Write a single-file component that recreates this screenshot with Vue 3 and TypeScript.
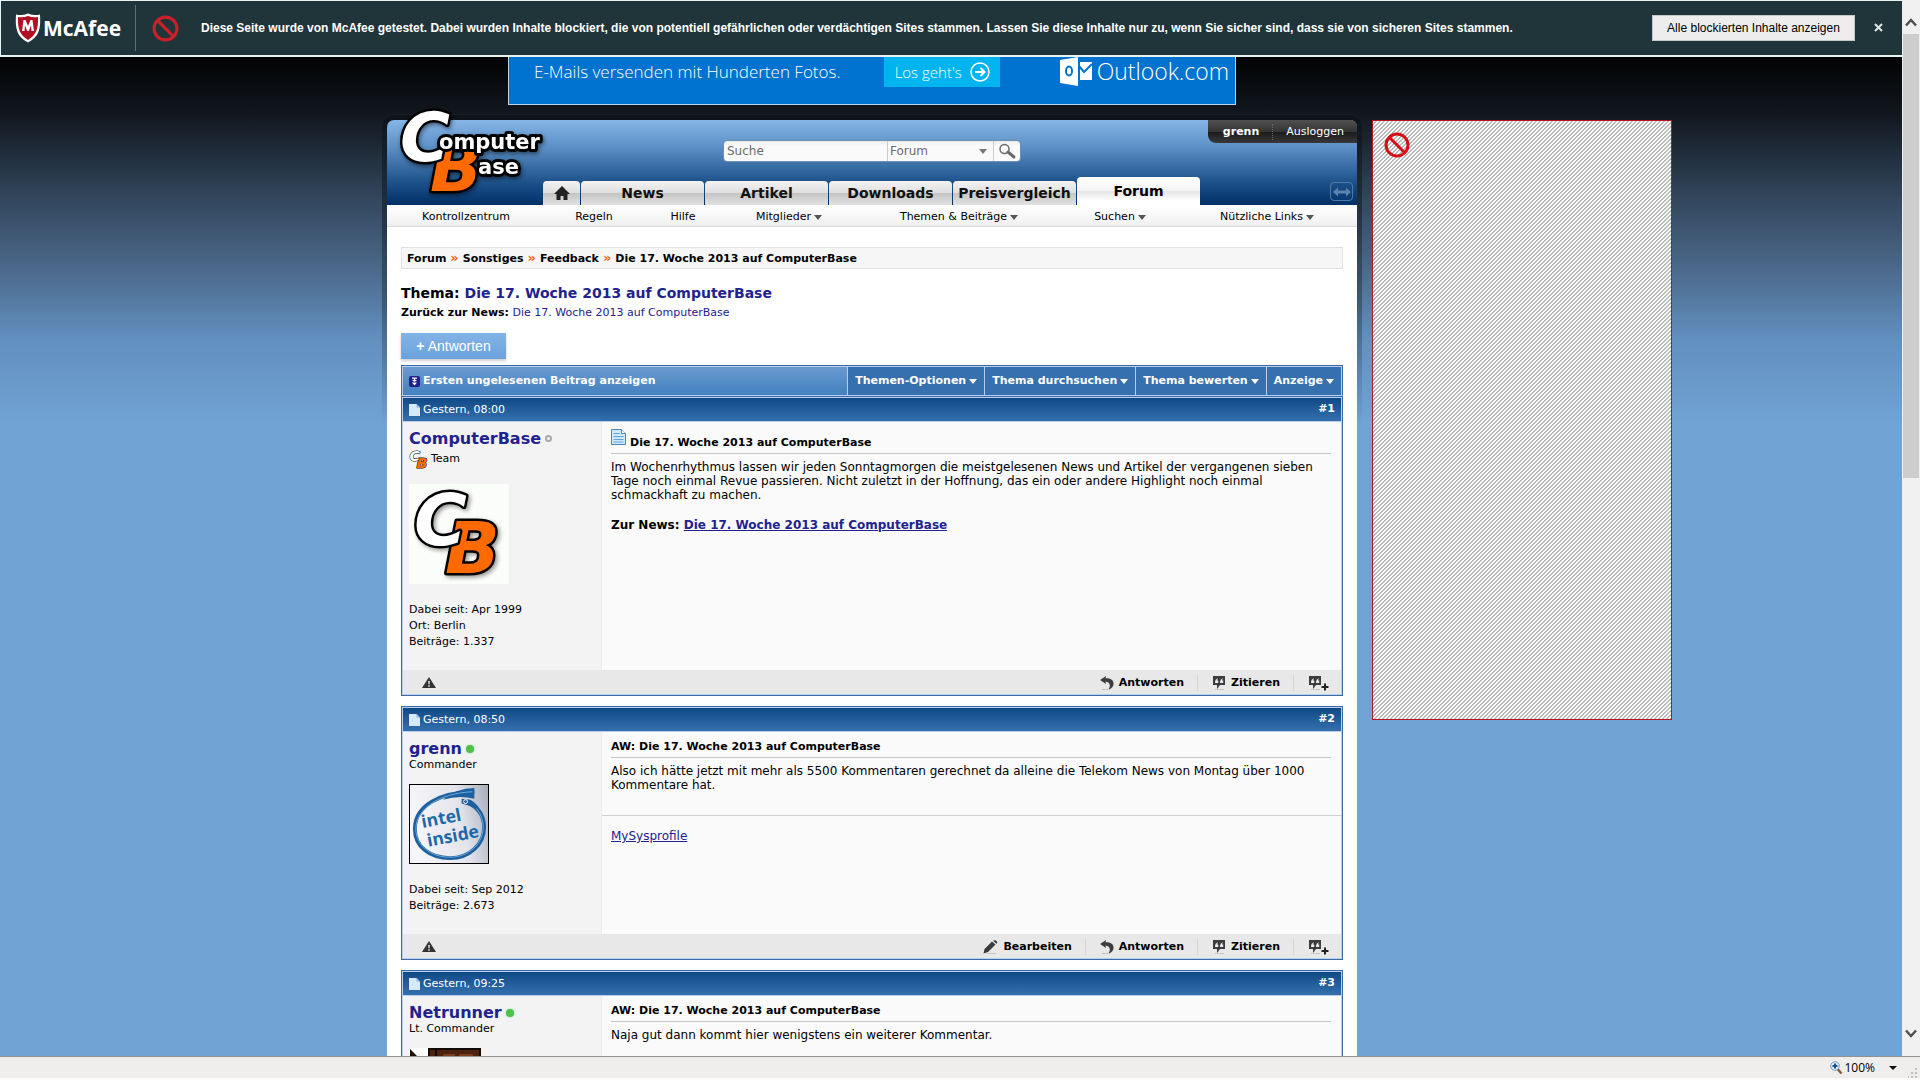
<script setup lang="ts">
interface Post {
  no: number
  time: string
  user: string
  online: boolean
  rank: string
  team?: boolean
  avatar: 'cb' | 'intel' | 'door'
  stats: string[]
  title: string
  icon?: boolean
  text: string
  newsLink?: string
  signature?: string
  editable?: boolean
}

const tabs = ['News', 'Artikel', 'Downloads', 'Preisvergleich']

const subnav = [
  { label: 'Kontrollzentrum', menu: false },
  { label: 'Regeln', menu: false },
  { label: 'Hilfe', menu: false },
  { label: 'Mitglieder', menu: true },
  { label: 'Themen & Beiträge', menu: true },
  { label: 'Suchen', menu: true },
  { label: 'Nützliche Links', menu: true },
]

const crumbs = ['Forum', 'Sonstiges', 'Feedback']
const threadTitle = 'Die 17. Woche 2013 auf ComputerBase'
const threadMenus = ['Themen-Optionen', 'Thema durchsuchen', 'Thema bewerten', 'Anzeige']

const posts: Post[] = [
  {
    no: 1,
    time: 'Gestern, 08:00',
    user: 'ComputerBase',
    online: false,
    rank: 'Team',
    team: true,
    avatar: 'cb',
    stats: ['Dabei seit: Apr 1999', 'Ort: Berlin', 'Beiträge: 1.337'],
    title: threadTitle,
    icon: true,
    text: 'Im Wochenrhythmus lassen wir jeden Sonntagmorgen die meistgelesenen News und Artikel der vergangenen sieben Tage noch einmal Revue passieren. Nicht zuletzt in der Hoffnung, das ein oder andere Highlight noch einmal schmackhaft zu machen.',
    newsLink: threadTitle,
  },
  {
    no: 2,
    time: 'Gestern, 08:50',
    user: 'grenn',
    online: true,
    rank: 'Commander',
    avatar: 'intel',
    stats: ['Dabei seit: Sep 2012', 'Beiträge: 2.673'],
    title: 'AW: ' + threadTitle,
    text: 'Also ich hätte jetzt mit mehr als 5500 Kommentaren gerechnet da alleine die Telekom News von Montag über 1000 Kommentare hat.',
    signature: 'MySysprofile',
    editable: true,
  },
  {
    no: 3,
    time: 'Gestern, 09:25',
    user: 'Netrunner',
    online: true,
    rank: 'Lt. Commander',
    avatar: 'door',
    stats: [],
    title: 'AW: ' + threadTitle,
    text: 'Naja gut dann kommt hier wenigstens ein weiterer Kommentar.',
  },
]
</script>

<template>
  <div class="window">
    <svg class="defs" width="0" height="0" aria-hidden="true">
      <symbol id="blocked" viewBox="0 0 26 26">
        <circle cx="13" cy="13" r="11" fill="none" stroke="currentColor" stroke-width="3" />
        <path d="M5.500 5.500 20.500 20.500" stroke="currentColor" stroke-width="3" />
      </symbol>
      <symbol id="quote" viewBox="0 0 14 14">
        <path d="M1 0h12v9H8l-3 4V9H1z" fill="#3c3c3c" />
        <path d="M6 2.200C4 3 3 4 3 7h3.200V4.400H5zM11 2.200C9 3 8 4 8 7h3.200V4.400H10z" fill="#eee" />
        <path d="M3 13.500h9" stroke="#c4c4c4" />
      </symbol>
    </svg>

    <div class="view">
      <main class="page">
        <section class="guard">
          <div class="guard-logo">
            <svg width="26" height="30" viewBox="0 0 26 30">
              <path d="M1 1.500Q7 3 13 .500Q19 3 25 1.500C26 16 24 24 13 29.500C2 24 0 16 1 1.500z" fill="#fff" />
              <path d="M3 4Q8 5 13 3Q18 5 23 4C23.500 16 21 22 13 27C5 22 2.500 16 3 4z" fill="#b01022" />
              <path d="M7 18L8.500 7h2L13 13l2.500-6h2L19 18h-2.500L16 12.500 13.800 18h-1.600L10 12.500 9.500 18z" fill="#fff" />
            </svg>
            <span>McAfee</span>
          </div>
          <svg class="guard-icon" width="27" height="27"><use href="#blocked" /></svg>
          <p>Diese Seite wurde von McAfee getestet. Dabei wurden Inhalte blockiert, die von potentiell gefährlichen oder verdächtigen Sites stammen. Lassen Sie diese Inhalte nur zu, wenn Sie sicher sind, dass sie von sicheren Sites stammen.</p>
          <button class="guard-show" type="button">Alle blockierten Inhalte anzeigen</button>
          <button class="guard-close" type="button" aria-label="Schließen">
            <svg width="9" height="9" viewBox="0 0 9 9"><path d="M1 1l7 7M8 1L1 8" stroke="#dfe6e6" stroke-width="2" /></svg>
          </button>
        </section>

        <div class="layout">
          <div class="site">
            <div class="banner">
              <span class="banner-text">E-Mails versenden mit Hunderten Fotos.</span>
              <a class="banner-go" href="#">
                Los geht's
                <svg width="20" height="20" viewBox="0 0 20 20" fill="none" stroke="#fff">
                  <circle cx="10" cy="10" r="9" stroke-width="1.500" />
                  <path d="M5 10h9M10.500 6l4 4-4 4" stroke-width="2" />
                </svg>
              </a>
              <div class="outlook">
                <svg width="32" height="30" viewBox="0 0 32 30">
                  <path d="M20 5h12v18H20z" fill="#fff" />
                  <path d="M19 9l5 6 8-8" stroke="#0072d0" stroke-width="2" fill="none" />
                  <path d="M0 3L18 0v29L0 26z" fill="#fff" />
                  <ellipse cx="9" cy="14" rx="3" ry="4.500" fill="none" stroke="#0072d0" stroke-width="2" />
                </svg>
                <span>Outlook.com</span>
              </div>
            </div>

            <div class="frame">
              <header class="head">
                <a class="logo" href="#" aria-label="ComputerBase">
                  <svg width="160" height="100" viewBox="0 0 160 100">
                    <g class="mark">
                      <text x="35" y="87" font-size="68" fill="#ff6a00">B</text>
                      <text x="5" y="57" font-size="68" fill="#fff">C</text>
                    </g>
                    <g class="words">
                      <text x="44" y="45">omputer</text>
                      <text x="83" y="70">ase</text>
                    </g>
                  </svg>
                </a>
                <form class="search" @submit.prevent>
                  <input type="text" placeholder="Suche" aria-label="Suche" />
                  <select aria-label="Bereich"><option>Forum</option></select>
                  <svg class="select-arrow" width="8" height="5"><path d="M0 0h8L4 5z" fill="#777" /></svg>
                  <button type="submit" aria-label="Suchen">
                    <svg width="18" height="16" viewBox="0 0 18 16" fill="none" stroke="#6b6b6b">
                      <circle cx="6.500" cy="6" r="4.500" stroke-width="1.500" />
                      <path d="M10 9l6 5" stroke-width="3" stroke-linecap="round" />
                    </svg>
                  </button>
                </form>
                <div class="user"><a href="#"><b>grenn</b></a><i></i><a href="#">Ausloggen</a></div>
                <nav class="tabs">
                  <a class="tab home" href="#" aria-label="Startseite">
                    <svg width="16" height="14" viewBox="0 0 16 14"><path d="M8 0l8 8h-2.500v6H9.500v-4h-3v4H2.500V8H0z" fill="#222" /></svg>
                  </a>
                  <a v-for="t in tabs" :key="t" class="tab" href="#">{{ t }}</a>
                  <a class="tab active" href="#">Forum</a>
                  <button class="wide" type="button" aria-label="Breite umschalten">
                    <svg width="18" height="10" viewBox="0 0 18 10"><path d="M0 5l5-4.500v3h8v-3L18 5l-5 4.500v-3H5v3z" fill="#5b83ad" /></svg>
                  </button>
                </nav>
              </header>

              <nav class="subnav">
                <a v-for="s in subnav" :key="s.label" href="#">
                  {{ s.label }}<svg v-if="s.menu" width="8" height="5"><path d="M0 0h8L4 5z" fill="#555" /></svg>
                </a>
              </nav>

              <div class="content">
                <div class="crumbs">
                  <template v-for="c in crumbs" :key="c"><a href="#">{{ c }}</a><em>»</em></template>
                  <span>{{ threadTitle }}</span>
                </div>
                <h1>Thema: <a href="#">{{ threadTitle }}</a></h1>
                <p class="back"><b>Zurück zur News:</b> <a href="#">{{ threadTitle }}</a></p>
                <button class="reply" type="button"><b>+</b> Antworten</button>

                <div class="toolbar">
                  <a class="unread" href="#">
                    <svg width="11" height="11" viewBox="0 0 11 11">
                      <rect width="11" height="11" rx="2" fill="#20208c" />
                      <path d="M3 1.500h5v1.200H6.200V4H8L5.500 6 3 4h1.800V2.700H3zM3 6.500h5L5.500 9.500z" fill="#fff" />
                    </svg>
                    Ersten ungelesenen Beitrag anzeigen
                  </a>
                  <button v-for="m in threadMenus" :key="m" type="button">
                    {{ m }}<svg width="8" height="5"><path d="M0 0h8L4 5z" fill="#fff" /></svg>
                  </button>
                </div>

                <article v-for="p in posts" :key="p.no" class="post">
                  <header class="post-head">
                    <svg width="11" height="12" viewBox="0 0 11 12">
                      <path d="M0 0h7.500L11 3.500V12H0z" fill="#d6e8fc" />
                      <path d="M7.500 0v3.500H11z" fill="#8fb6e2" />
                    </svg>
                    <span>{{ p.time }}</span>
                    <a href="#">#{{ p.no }}</a>
                  </header>
                  <div class="post-body">
                    <aside>
                      <div class="name">
                        <a href="#">{{ p.user }}</a>
                        <span :class="['dot', { on: p.online }]"></span>
                      </div>
                      <div :class="['rank', { team: p.team }]">
                        <svg v-if="p.team" width="20" height="20" viewBox="0 0 100 100" class="mark">
                          <text x="38" y="94" font-size="72" fill="#ff6a00">B</text>
                          <text x="2" y="58" font-size="72" fill="#fff">C</text>
                        </svg>{{ p.rank }}
                      </div>
                      <div class="avatar">
                        <svg v-if="p.avatar === 'cb'" class="av-cb" width="100" height="100" viewBox="0 0 100 100">
                          <g class="mark">
                            <text x="36" y="89" font-size="72" fill="#ff6a00">B</text>
                            <text x="5" y="61" font-size="72" fill="#fff">C</text>
                          </g>
                        </svg>
                        <svg v-else-if="p.avatar === 'intel'" class="av-intel" width="80" height="80" viewBox="0 0 80 80">
                          <defs>
                            <linearGradient id="steel" x1="0" x2="1" y1=".3" y2=".1">
                              <stop offset="0" stop-color="#f6f6fa" />
                              <stop offset=".6" stop-color="#e4e5ec" />
                              <stop offset="1" stop-color="#aab0bf" />
                            </linearGradient>
                          </defs>
                          <rect width="80" height="80" fill="url(#steel)" />
                          <path d="M57 17C69 22 76 31 76 43C76 61 61 75 41 75C20 75 5 63 5 45C5 22 31 6 66 8" fill="none" stroke="#1d5f9f" stroke-width="4" />
                          <path d="M66 3v11Q50 10 34 15Q48 3 66 3z" fill="#1d5f9f" />
                          <path d="M53 14l9 1q7 4 11 12l-6-4-14-4z" fill="#1d5f9f" />
                          <path d="M68 24C73 30 75 36 75 43C75 60 61 74 41 74C21 74 6 62 6 45C6 24 31 8 64 7" fill="none" stroke="#6fabd8" stroke-width="1" />
                          <circle cx="57" cy="17" r="2" fill="none" stroke="#fff" />
                          <g transform="rotate(-11 40 42)" class="intel-text">
                            <text x="13" y="39">intel</text>
                            <text x="15" y="59">inside</text>
                          </g>
                        </svg>
                        <svg v-else width="72" height="80" viewBox="0 0 72 80">
                          <rect width="72" height="80" fill="#fff" />
                          <path d="M1 1l12 12v67H1z" fill="#1c0d04" />
                          <rect x="19" width="53" height="80" fill="#140a04" />
                          <path d="M21 2h5v78h-5zM28 2h42v78H28z" fill="#4d230f" />
                          <path d="M34 6h12v74H34zM50 6h14v74H50z" fill="#7a3d1e" />
                        </svg>
                      </div>
                      <div v-for="s in p.stats" :key="s" class="stat">{{ s }}</div>
                    </aside>
                    <section>
                      <h2>
                        <svg v-if="p.icon" width="15" height="16" viewBox="0 0 15 16">
                          <path d="M.500.500h10l4 4v11H.500z" fill="#cfe8fb" stroke="#4a86b8" />
                          <path d="M10.500.500v4h4" fill="#fff" stroke="#4a86b8" />
                          <path d="M2.500 4.500h6M2.500 7.500h10M2.500 10.500h10M2.500 13h10" stroke="#5aa6df" />
                        </svg>
                        {{ p.title }}
                      </h2>
                      <p>{{ p.text }}</p>
                      <p v-if="p.newsLink" class="news"><b>Zur News: <a href="#">{{ p.newsLink }}</a></b></p>
                      <div v-if="p.signature" class="signature"><a href="#">{{ p.signature }}</a></div>
                    </section>
                  </div>
                  <footer class="post-foot">
                    <button class="report" type="button" aria-label="Beitrag melden">
                      <svg width="14" height="12" viewBox="0 0 14 12">
                        <path d="M7 0l7 11H0z" fill="#333" />
                        <path d="M6.200 4h1.600l-.4 3.500h-.8zM6.300 8.300h1.400v1.400H6.300z" fill="#fff" />
                      </svg>
                    </button>
                    <button v-if="p.editable" type="button">
                      <svg width="15" height="14" viewBox="0 0 15 14">
                        <path d="M1.500 9L9 1.500l3.500 3L5 12 .500 13.500zM10 .800Q12-.500 14 1.500Q14.800 2.700 13.400 3.800z" fill="#3c3c3c" />
                        <path d="M4 13.500h9" stroke="#c4c4c4" />
                      </svg>
                      Bearbeiten
                    </button>
                    <button type="button">
                      <svg width="14" height="14" viewBox="0 0 14 14">
                        <path d="M0 4L6 0l-.5 2.300C11 2 14 4.500 13.500 8.500C13 11 11.500 12.500 8.500 13.500C10.800 10 10.500 6 5.500 5.400L6 8z" fill="#3c3c3c" />
                        <path d="M2 13.500h8" stroke="#c4c4c4" />
                      </svg>
                      Antworten
                    </button>
                    <button type="button"><svg width="14" height="14"><use href="#quote" /></svg>Zitieren</button>
                    <button type="button" aria-label="Mehrfach zitieren">
                      <svg width="20" height="16" viewBox="0 0 20 16">
                        <use href="#quote" width="14" height="14" y="1" />
                        <path d="M17 8.500v7M13.500 12h7" stroke="#222" stroke-width="2" />
                      </svg>
                    </button>
                  </footer>
                </article>
              </div>
            </div>
          </div>

          <aside class="skyscraper"><svg width="26" height="26"><use href="#blocked" /></svg></aside>
        </div>
      </main>

      <div class="scroll">
        <svg class="up" width="12" height="9" viewBox="0 0 12 9"><path d="M1 7.500l5-5.500 5 5.500" fill="none" stroke="#505050" stroke-width="2.500" /></svg>
        <div class="thumb"></div>
        <svg class="down" width="12" height="9" viewBox="0 0 12 9"><path d="M1 1.500L6 7l5-5.500" fill="none" stroke="#505050" stroke-width="2.500" /></svg>
      </div>
    </div>

    <div class="status">
      <svg width="12" height="13" viewBox="0 0 12 13">
        <path d="M7.500 8l4 4.500" stroke="#8a5a3c" stroke-width="2.500" />
        <circle cx="5" cy="5" r="4.300" fill="#e2f0fb" stroke="#6d9cc4" />
        <path d="M5 2.500v5M2.500 5h5" stroke="#174f9c" stroke-width="2" />
      </svg>
      <span>100%</span>
      <svg class="zoom-arrow" width="8" height="4"><path d="M0 0h8L4 4z" fill="#111" /></svg>
      <svg class="grip" width="10" height="10" viewBox="0 0 10 10"><path d="M7 0h2v2H7zM3 4h2v2H3zM7 4h2v2H7zM0 8h1v2H0zM3 8h2v2H3zM7 8h2v2H7z" fill="#bdbdbd" /></svg>
    </div>
  </div>
</template>

<style>
html,
body {
  margin: 0;
  overflow: hidden;
}
</style>

<style scoped>
.window {
  height: 100vh;
  display: flex;
  flex-direction: column;
  font: 11px/14px 'DejaVu Sans', Verdana, sans-serif;
  color: #000;
}
.window *,
.window *::before {
  box-sizing: border-box;
}
a {
  color: inherit;
  text-decoration: none;
}
button,
input,
select {
  font: inherit;
  border: 0;
  padding: 0;
  margin: 0;
  background: none;
  border-radius: 0;
}
svg {
  flex: none;
  overflow: visible;
}
.defs {
  position: absolute;
}
.mark {
  font-family: 'DejaVu Sans', Verdana, sans-serif;
  font-weight: bold;
  font-style: italic;
  stroke: #000;
  stroke-width: 5px;
  stroke-linejoin: round;
  paint-order: stroke;
}
.view {
  flex: 1;
  min-height: 0;
  display: flex;
}
.page {
  flex: 1;
  min-width: 0;
  overflow: hidden;
  background: #71a3d5
    linear-gradient(#000 50px, #12181f 115px, #1f2b39 150px, #33475e 200px, #4a6788 265px, #6290bf 340px, #71a3d5 425px);
}

.guard {
  height: 57px;
  display: flex;
  align-items: center;
  background: #20353a;
  border: 1px solid #e6f3f3;
  border-width: 1px 0 2px 1px;
  color: #fff;
  font: bold 12px/16px 'Liberation Sans', Arial, sans-serif;
}
.guard-logo {
  display: flex;
  align-items: center;
  gap: 2px;
  width: 135px;
  height: 46px;
  padding-left: 14px;
  border-right: 1px solid #587076;
}
.guard-logo span {
  font: bold 21px/30px 'Open Sans', sans-serif;
}
.guard-icon {
  margin-left: 16px;
  color: #c9202a;
}
.guard p {
  flex: 1;
  margin: 0 0 0 22px;
  white-space: nowrap;
}
.guard-show {
  height: 26px;
  width: 203px;
  background: #ededed;
  border: 1px solid #c2c8c8;
  color: #000;
  font-weight: normal;
}
.guard-close {
  width: 47px;
  height: 26px;
}

.layout {
  display: flex;
  align-items: flex-start;
  padding-left: calc(50% - 564px);
}
.site {
  flex: 0 1 970px;
  min-width: 0;
}
.banner {
  display: flex;
  align-items: flex-start;
  max-width: 728px;
  height: 48px;
  margin: 0 auto;
  padding: 0 6px 0 25px;
  background: #0072d0;
  border: 1px solid #b9d5ee;
  border-top: 0;
  color: #fff;
  font-family: 'Open Sans', sans-serif;
  font-weight: 300;
}
.banner-text {
  font-size: 17px;
  line-height: 30px;
  white-space: nowrap;
}
.banner-go {
  display: flex;
  align-items: center;
  justify-content: space-between;
  width: 116px;
  height: 30px;
  margin-left: auto;
  padding: 0 10px 0 11px;
  background: #00b4f0;
  font-size: 15px;
}
.outlook {
  display: flex;
  margin-left: 60px;
  gap: 5px;
  font-size: 23px;
  line-height: 28px;
}

.frame {
  margin: 10px -5px 0;
  padding: 5px 5px 0;
  border-radius: 12px 12px 0 0;
  background: linear-gradient(#0d1319, #1b2632 60px, rgba(40, 56, 74, 0.7) 140px, rgba(90, 130, 175, 0) 310px);
  box-shadow: 0 -1px 0 #182226;
}
.head {
  position: relative;
  display: grid;
  grid-template-columns: 1fr auto 1fr;
  grid-template-rows: 57px 28px;
  background: linear-gradient(#86b5e7, #5f92c8 30%, #22568f 70%, #003066);
  border-radius: 7px 7px 0 0;
}
.logo {
  position: absolute;
  left: 8px;
  top: -16px;
  height: 100px;
}
.logo svg {
  filter: drop-shadow(1px 2px 2px rgba(0, 0, 0, 0.5));
}
.words {
  font: bold 21px 'DejaVu Sans', Verdana, sans-serif;
  fill: #fff;
  stroke: #000;
  stroke-width: 6px;
  stroke-linejoin: round;
  paint-order: stroke;
}
.search {
  grid-column: 2;
  position: relative;
  display: flex;
  width: 298px;
  height: 22px;
  margin-top: 20px;
  border: 1px solid #6c8fb5;
  border-radius: 4px;
  background: linear-gradient(#ececec, #fafafa 5px);
  font-size: 12px;
  overflow: hidden;
}
.search input {
  flex: 1;
  min-width: 0;
  padding-left: 3px;
}
.search input::placeholder {
  color: #6b6b6b;
  opacity: 1;
}
.search select {
  appearance: none;
  width: 106px;
  padding-left: 2px;
  border-left: 1px solid #ccc;
  color: #6b6b6b;
}
.select-arrow {
  position: absolute;
  right: 33px;
  top: 8px;
  pointer-events: none;
}
.search button {
  display: flex;
  align-items: center;
  justify-content: center;
  width: 27px;
  border-left: 1px solid #ccc;
}
.user {
  grid-column: 3;
  justify-self: end;
  display: flex;
  align-items: center;
  height: 23px;
  padding: 0 13px 0 15px;
  background: linear-gradient(#505050, #343434 50%, #1a1a1a 50%, #383838);
  border-radius: 0 6px 0 8px;
  color: #fff;
}
.user i {
  height: 16px;
  margin: 0 13px;
  border-left: 1px dotted #666;
}
.tabs {
  grid-column: 1 / 4;
  display: flex;
  align-items: flex-end;
  gap: 1px;
  padding-left: 156px;
}
.tab {
  display: flex;
  align-items: center;
  justify-content: center;
  width: 123px;
  height: 24px;
  border-radius: 4px 4px 0 0;
  background: linear-gradient(#f3f3f3, #dedede 50%, #c4c4c4 50%, #e2e2e2);
  color: #111;
  font-weight: bold;
  font-size: 14px;
}
.tab.home {
  width: 37px;
}
.tab.active {
  height: 28px;
  background: linear-gradient(#fff, #f4f4f4 50%, #e4e4e4 52%, #fff 85%);
  color: #000;
}
.wide {
  display: flex;
  align-items: center;
  justify-content: center;
  width: 23px;
  height: 19px;
  margin: 0 4px 4px auto;
  border: 1px solid #4f7aa8;
  border-radius: 4px;
}
.subnav {
  display: grid;
  grid-template-columns: 158fr 98fr 80fr 132fr 208fr 114fr 180fr;
  height: 22px;
  background: linear-gradient(#fff, #f0f0f0);
  border-bottom: 1px solid #d9d9d9;
  line-height: 24px;
  text-align: center;
  white-space: nowrap;
}
.subnav svg,
.toolbar button svg {
  margin-left: 3px;
  vertical-align: middle;
}
.content {
  padding: 20px 14px;
  background: #fff;
}
.crumbs {
  display: flex;
  gap: 4px;
  height: 22px;
  padding-left: 5px;
  background: #f6f6f6;
  border: 1px solid #e2e2e2;
  font-weight: bold;
  line-height: 22px;
}
.crumbs em {
  color: #f26b1d;
  font-style: normal;
  font-size: 13px;
  line-height: 20px;
}
h1 {
  margin: 15px 0 0;
  font-size: 14px;
  line-height: 18px;
}
h1 a,
.back a,
.name a,
.news a,
.signature a {
  color: #22228e;
}
.back {
  margin: 4px 0 13px;
}
.reply {
  display: block;
  width: 105px;
  height: 26px;
  background: linear-gradient(#83b3e6, #6aa2de);
  box-shadow: 0 2px 3px rgba(0, 0, 0, 0.2);
  color: #fff;
  font: 14px/16px 'Liberation Sans', Arial, sans-serif;
}
.toolbar {
  display: flex;
  height: 31px;
  margin-top: 6px;
  border: 1px solid #3f6ba5;
  border-bottom: 1px solid #b9cdef;
  box-shadow: inset 1px 1px 0 #b9cdef, inset -1px 0 0 #b9cdef;
  padding: 1px 1px 0;
  color: #fff;
  font-weight: bold;
}
.toolbar button {
  padding: 0 7px;
  background: #3670ae;
  border-left: 1px solid #b9cdef;
  font-weight: bold;
  color: #fff;
}
.unread {
  flex: 1;
  display: flex;
  align-items: center;
  gap: 3px;
  padding-left: 6px;
  background: linear-gradient(#6a9ad0, #4381bf);
}

.post {
  margin-bottom: 10px;
  border: 1px solid #3f6ba5;
  box-shadow: inset 0 0 0 1px #b9cdef;
  padding: 1px;
}
.post-head {
  display: flex;
  align-items: center;
  gap: 3px;
  height: 24px;
  padding: 0 6px;
  background: linear-gradient(#0f4986, #3570ae);
  border-bottom: 1px solid #b9cdef;
  color: #fff;
}
.post-head a {
  align-self: flex-start;
  margin: 4px 0 0 auto;
  font-weight: bold;
}
.post-body {
  display: flex;
}
.post-body aside {
  width: 198px;
  padding: 7px 6px 20px;
  background: #f3f3f3;
}
.post-body section {
  flex: 1;
  min-width: 0;
  background: #fafafa;
  border-left: 1px solid #ededed;
}
.name {
  display: flex;
  align-items: center;
  gap: 4px;
  font-weight: bold;
  font-size: 16px;
  line-height: 19px;
}
.dot {
  width: 7px;
  height: 7px;
  border: 2px solid #aaa;
  border-radius: 50%;
}
.dot.on {
  width: 8px;
  height: 8px;
  border: 0;
  background: #4fc04a;
  box-shadow: 0 0 2px #7fd87a;
}
.rank.team {
  display: flex;
  align-items: center;
  gap: 2px;
  height: 24px;
  padding-bottom: 2px;
}
.avatar {
  margin: 12px 0 18px;
}
.avatar svg {
  display: block;
}
.av-cb {
  background: #fbfdfa;
}
.av-cb .mark {
  filter: drop-shadow(2px 2px 2px rgba(0, 0, 0, 0.4));
}
.av-intel {
  border: 1px solid #000;
  overflow: hidden;
}
.intel-text {
  font: bold 18px 'Open Sans', sans-serif;
  fill: #2069a8;
}
.stat {
  line-height: 16px;
}
h2 {
  display: flex;
  align-items: flex-end;
  gap: 4px;
  margin: 0 10px 6px 9px;
  padding: 7px 0 2px;
  border-bottom: 1px solid #c6c6c6;
  font-size: 11px;
  line-height: 16px;
}
h2 svg {
  margin-bottom: 6px;
}
.post-body p {
  margin: 0 10px 0 9px;
  font-size: 12px;
  line-height: 14px;
}
.post-body p.news {
  margin-top: 16px;
}
.news a,
.signature a {
  text-decoration: underline;
}
.signature {
  margin-top: 23px;
  padding: 13px 9px;
  border-top: 1px solid #cfcfcf;
  font-size: 12px;
  line-height: 14px;
}
.post-foot {
  display: flex;
  align-items: center;
  height: 24px;
  padding-top: 2px;
  background: #e8e8e8;
}
.post-foot button {
  display: flex;
  align-items: center;
  gap: 5px;
  height: 16px;
  padding: 0 13px 0 14px;
  font-weight: bold;
}
.post-foot button + button + button {
  border-left: 1px solid #d6d6d6;
}
.post-foot .report {
  margin: 0 auto 0 5px;
}

.skyscraper {
  flex: none;
  width: 300px;
  height: 600px;
  margin: 63px 0 0 15px;
  padding: 11px;
  border: 1px solid #b81420;
  background: linear-gradient(-45deg, #b9b9b9 25%, #fff 25% 50%, #b9b9b9 50% 75%, #fff 75%) 0 0 / 4px 4px;
  color: #d40f18;
}

.scroll {
  flex: none;
  width: 18px;
  display: flex;
  flex-direction: column;
  align-items: center;
  background: #f0f0f0;
}
.up {
  margin: 18px 0 7px;
}
.thumb {
  width: 16px;
  height: 42%;
  background: #cdcdcd;
}
.down {
  margin: auto 0 18px;
}
.status {
  flex: none;
  display: flex;
  align-items: center;
  height: 24px;
  padding-right: 2px;
  background: #f0eeed;
  border-top: 1px solid #919191;
  border-bottom: 2px solid #fafafa;
  font: 12px/16px 'Open Sans', sans-serif;
}
.status > svg:first-child {
  margin: 0 2px 0 auto;
}
.zoom-arrow {
  margin: 0 11px 0 14px;
}
.grip {
  align-self: flex-end;
}
</style>
